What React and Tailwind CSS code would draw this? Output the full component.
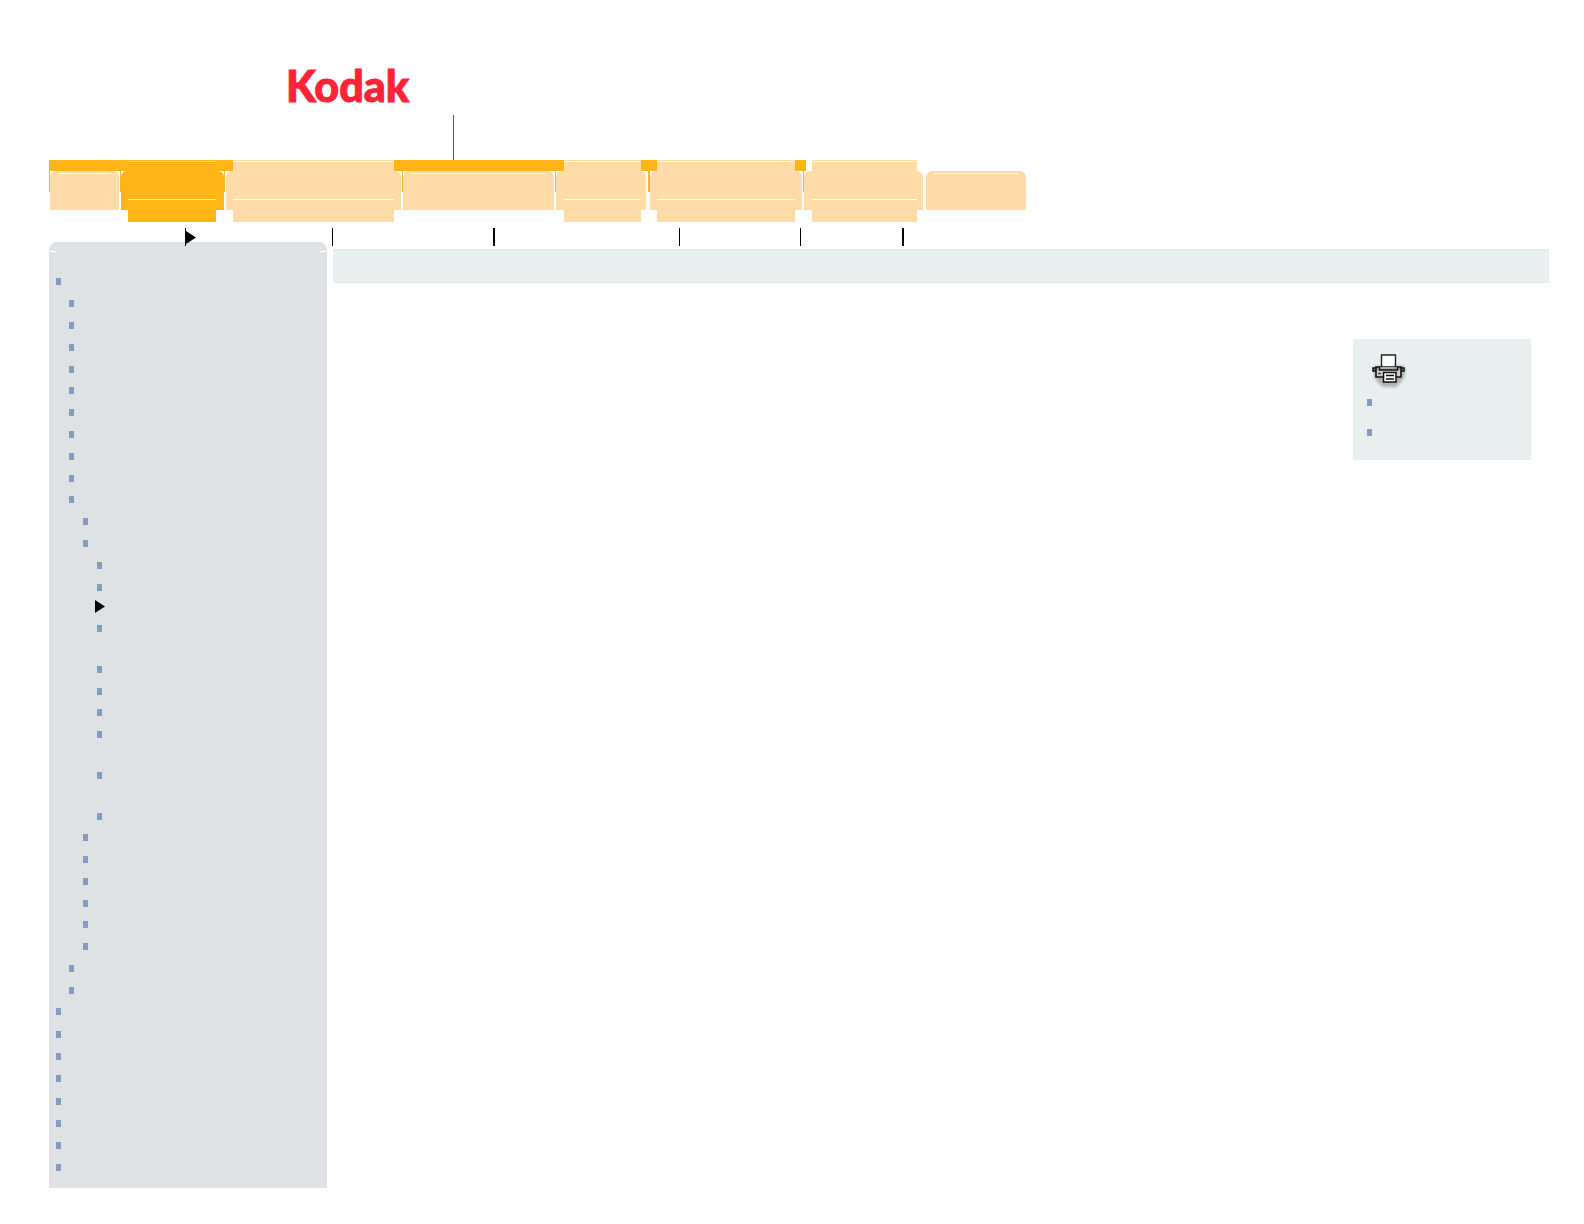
const TABS = [
  { id: 1, box: 'w-[69px] mr-px rounded-t-md', plate: null },
  { id: 2, box: 'w-[103px] rounded-t-md', plate: 'left-[7px] right-2', active: true },
  { id: 3, box: 'w-[175px] ml-px mr-px rounded-t-md', plate: 'left-[7px] right-[7px]' },
  { id: 4, box: 'w-[151px] mr-px rounded-t-md', plate: null },
  { id: 5, box: 'w-[90px] mr-[2px] rounded-t-md', plate: 'left-2 right-[5px]' },
  { id: 6, box: 'w-[152px] mr-px rounded-t-md', plate: 'left-[7px] right-[7px]' },
  { id: 7, box: 'w-[119px] mr-[3px] rounded-t-md', plate: 'left-2 right-[6px]' },
  { id: 8, box: 'w-[100px] rounded-t-md', plate: null },
];

const INDENT = ['pl-[7px]', 'pl-[20px]', 'pl-[34px]', 'pl-[48px]'];
const HEIGHT = {
  19: 'h-[19px]',
  21: 'h-[21px]',
  22: 'h-[22px]',
  23: 'h-[23px]',
  41: 'h-[41px]',
};

const ROWS = [
  [0, 22],
  [1, 22], [1, 22], [1, 22], [1, 21], [1, 22], [1, 22], [1, 22], [1, 22], [1, 21], [1, 22],
  [2, 22], [2, 22],
  [3, 22], [3, 19], [3, 22, true], [3, 41], [3, 22], [3, 21], [3, 22], [3, 41], [3, 41], [3, 21],
  [2, 22], [2, 22], [2, 22], [2, 21], [2, 22], [2, 22],
  [1, 22], [1, 21],
  [0, 23], [0, 22], [0, 22], [0, 23], [0, 22], [0, 22], [0, 22], [0, 23],
];

function Arrow() {
  return (
    <svg width="10" height="13" viewBox="0 0 10 13" className="block shrink-0" aria-hidden="true">
      <path d="M0 0 L10 6.5 L0 13 Z" fill="#000" />
    </svg>
  );
}

function Bullet() {
  return <span className="block h-[7px] w-[5px] shrink-0 bg-[#859bbf]" />;
}

function Tab({ tab }) {
  const fill = tab.active ? 'bg-[#ffb516]' : 'bg-[#ffdba8]';
  return (
    <button
      type="button"
      aria-label={`Section ${tab.id}`}
      className={`relative h-[39px] shrink-0 ${fill} ${tab.box}`}
    >
      {tab.plate ? (
        <span className={`absolute -top-[11px] -bottom-3 flex flex-col ${tab.plate} ${fill}`}>
          <span className={`mt-px h-px ${tab.active ? 'bg-[#ffdb90]' : 'bg-[#fff8ec]'}`} />
          <span className={`mt-[37px] h-px ${tab.active ? 'bg-[#ffe9b8]' : 'bg-white'}`} />
        </span>
      ) : (
        <span className="absolute inset-x-2 top-[2px] h-px bg-white" />
      )}
    </button>
  );
}

function Separator({ wide }) {
  return <span className={`h-[21px] shrink-0 bg-[#f9b62c] ${wide ? 'w-[2px]' : 'w-px'}`} />;
}

function Printer() {
  return (
    <svg width="36" height="36" viewBox="0 0 36 36" className="block" aria-hidden="true">
      <defs>
        <filter id="soft" x="-20%" y="-20%" width="140%" height="140%">
          <feGaussianBlur stdDeviation="1.4" />
        </filter>
      </defs>
      <path d="M2 13h31v9l-3 6-6 6H12l-6-4-4-7z" fill="#8d9191" opacity=".65" filter="url(#soft)" />
      <path d="M9.500 2h14v13h-14z" fill="#fff" stroke="#222" strokeWidth="1.4" />
      <path d="M1 15h4v3H1zM28 15h4v3h-4z" fill="#999" stroke="#111" strokeWidth="1.5" />
      <path d="M4 14h25v10H4z" fill="#ccc" stroke="#111" strokeWidth="1.6" />
      <path d="M5 15h23v2H5z" fill="#999" />
      <path d="M7.500 14v3h18v-3" fill="#aaa" stroke="#111" strokeWidth="1.4" />
      <path d="M6.500 20.500h2" stroke="#111" strokeWidth="1.5" />
      <path d="M11.500 19.500h12.500v9.500H11.500z" fill="#fff" stroke="#111" strokeWidth="1.5" />
      <path d="M14 22.500h8M14 26h8" stroke="#111" strokeWidth="1.5" />
    </svg>
  );
}

export default function App() {
  return (
    <div className="min-h-screen bg-white pr-[35px] pb-9 pl-[49px] font-['Lato',sans-serif]">
      <header>
        <div className="flex h-40 items-end">
          <a
            href="#home"
            className="mb-[46px] ml-[237px] w-[167px] text-[43px] leading-[56px] font-black text-[#ff2337] [-webkit-text-stroke:1px_#ff2337]"
          >
            Kodak
          </a>
          <span className="h-[45px] w-px bg-[#555]" />
        </div>
        <nav aria-label="Sections">
          <div className="h-[11px] w-[757px] bg-[#ffb516]" />
          <div className="flex items-start">
            {TABS.map((tab) => (
              <div key={tab.id} className="contents">
                {tab.id < 8 && <Separator wide={tab.id === 6} />}
                <Tab tab={tab} />
              </div>
            ))}
          </div>
        </nav>
        <div className="relative z-10 mt-[18px] flex h-[14px] items-start">
          <span className="ml-[136px] h-[18px] w-px bg-black" />
          <span className="mt-[3px] -mr-[10px]">
            <Arrow />
          </span>
          <span className="ml-[146px] h-[18px] w-px bg-black" />
          <span className="ml-[160px] h-[18px] w-[2px] bg-black" />
          <span className="ml-[184px] h-[18px] w-px bg-black" />
          <span className="ml-[120px] h-[18px] w-px bg-black" />
          <span className="ml-[101px] h-[18px] w-[2px] bg-black" />
        </div>
      </header>

      <div className="flex gap-[6px]">
        <aside className="w-[278px] shrink-0 rounded-t-lg bg-[#dee2e5]">
          <div className="flex h-9 justify-between pt-[9px]">
            <span className="h-px w-[7px] bg-white" />
            <span className="h-px w-[7px] bg-white" />
          </div>
          <ul className="pb-px">
            {ROWS.map(([level, height, current], i) => (
              <li key={i} className={`${HEIGHT[height]} ${INDENT[level]}`}>
                <div className="flex h-[7px] items-center">
                  {current ? (
                    <span className="-ml-[2px]">
                      <Arrow />
                    </span>
                  ) : (
                    <Bullet />
                  )}
                </div>
              </li>
            ))}
          </ul>
        </aside>

        <main className="min-w-0 flex-1 pt-[7px]">
          <div className="h-[34px] border-y border-[#e2e8e8] bg-[#e9eeee]" />
          <section className="mt-14 mr-[18px] ml-auto h-[121px] w-[178px] bg-[#e9eeee] pt-[14px] pl-[14px]">
            <div className="ml-[5px]">
              <Printer />
            </div>
            <ul className="mt-[10px] flex flex-col gap-[23px]">
              <li>
                <Bullet />
              </li>
              <li>
                <Bullet />
              </li>
            </ul>
          </section>
        </main>
      </div>
    </div>
  );
}
